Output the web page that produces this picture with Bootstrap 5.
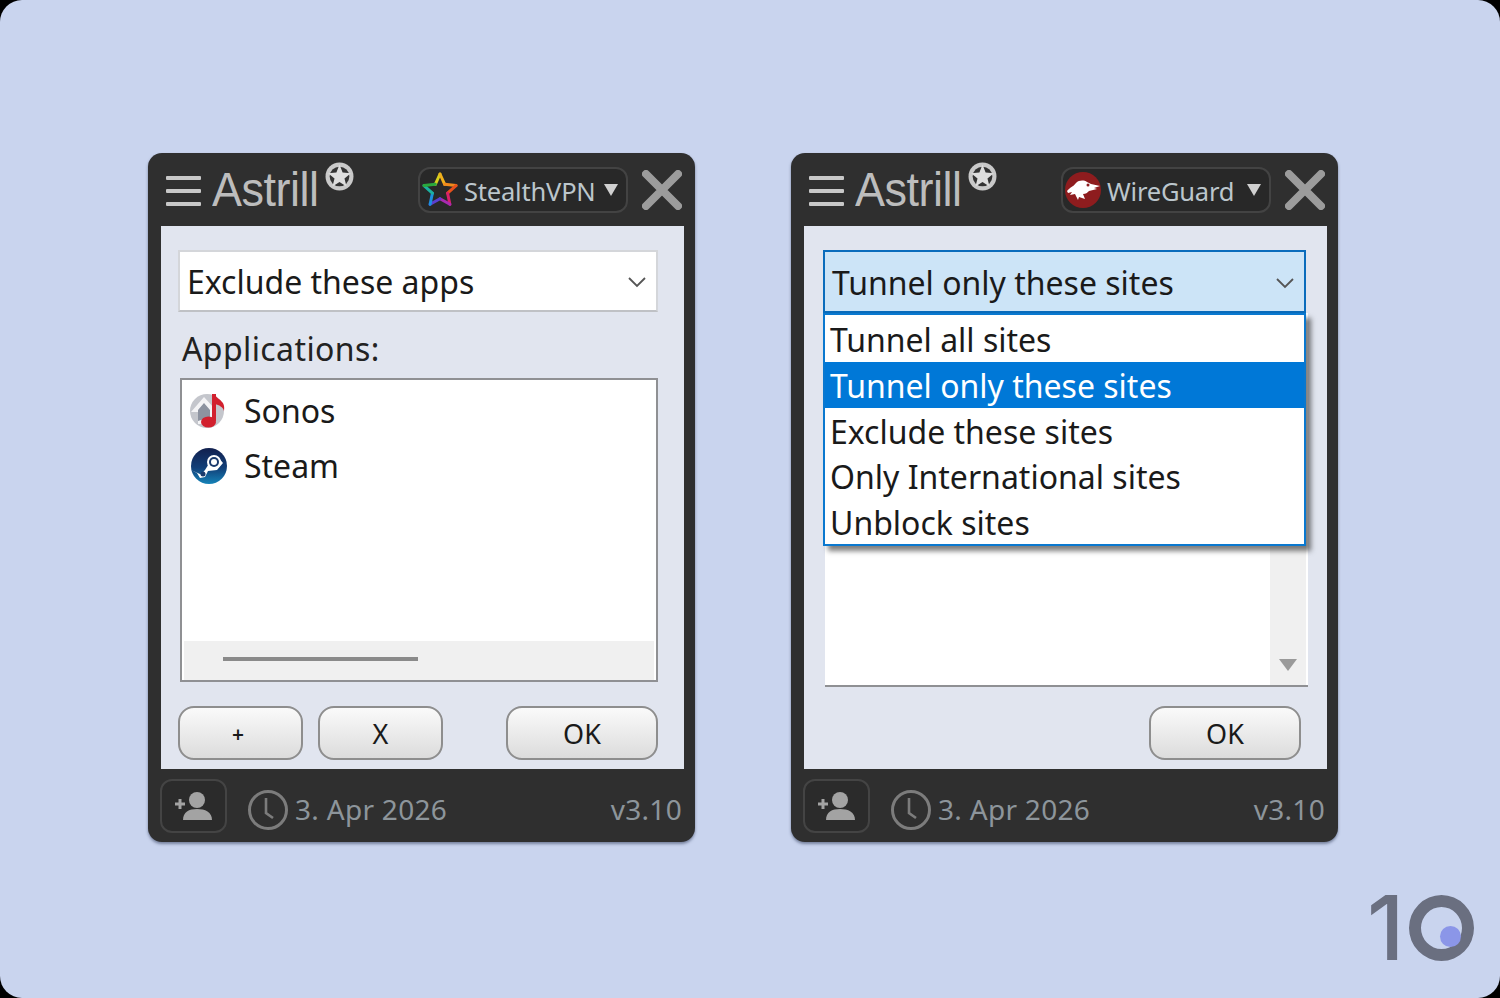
<!DOCTYPE html>
<html lang="en">
<head>
    <meta charset="UTF-8">
    <meta name="viewport" content="width=device-width, initial-scale=1.0">
    <title>Astrill split tunneling</title>
    <link rel="stylesheet" href="https://cdn.jsdelivr.net/npm/bootstrap@5.3.0/dist/css/bootstrap.min.css">
    <style>
        html, body { height: 100%; }
        body { background: #000; font-family: "Noto Sans", "Open Sans", sans-serif; color: #1a1a1a; }
        .stage {
            position: relative;
            width: 1500px;
            height: 998px;
            padding: 153px 0 0 148px;
            gap: 96px;
            background: #c9d4ee;
            border-radius: 22px;
            overflow: hidden;
        }
        .app-win {
            width: 547px;
            height: 689px;
            background: #2f2f2f;
            border-radius: 14px;
            box-shadow: 0 2px 3px rgba(50, 60, 90, .55);
        }
        .win-head { height: 73px; padding: 0 13px 0 18px; }
        .burger { width: 35px; height: 30px; margin-top: 2px; }
        .burger i { display: block; height: 4px; margin-bottom: 9px; background: #c8c8c8; border-radius: 1px; }
        .brand {
            margin-left: 11px;
            font: 400 45px/1 "Liberation Sans", sans-serif;
            letter-spacing: -.5px;
            color: #bdbdbd;
            transform: scaleY(1.08);
        }
        .globe { width: 29px; height: 29px; margin: -26px 0 0 6px; }
        .proto {
            width: 210px;
            height: 46px;
            margin: 0 14px 0 auto;
            padding: 0 8px 0 1px;
            background: #282828;
            border: 2px solid #434343;
            border-radius: 12px;
            font-size: 25.5px;
            letter-spacing: -.2px;
            color: #bcc6cc;
        }
        .proto svg { flex: none; }
        .proto-name { margin: 3px 0 0 5px; }
        .caret-down { width: 0; height: 0; margin-left: auto; border: 7px solid transparent; border-top: 12px solid #d0d0d0; border-bottom: 0; }
        .close-x { width: 40px; height: 40px; }
        .win-main {
            position: relative;
            height: 543px;
            margin: 0 11px 0 13px;
            padding: 24px 26px 0 17px;
            background: #e1e5ef;
        }
        .win-main.wide { padding: 24px 21px 0 19px; }
        .combo {
            height: 62px;
            padding: 2px 9px 0 7px;
            background: #fff;
            border: 2px solid #d4d6da;
            border-bottom-color: #bfc1c5;
            font-size: 32px;
        }
        .combo.open { height: 63px; background: #cce4f7; border-color: #0a6cbc; }
        .chev { width: 20px; height: 12px; margin-left: auto; }
        .field-label { height: 66px; padding: 19px 0 0 4px; font-size: 32px; line-height: 36px; letter-spacing: .4px; color: #222; }
        .app-list {
            position: relative;
            height: 304px;
            margin-left: 2px;
            padding-top: 3px;
            background: #fff;
            border: 2px solid #8f9093;
        }
        .app-row { height: 55px; padding-left: 8px; font-size: 32px; }
        .app-row svg { margin-right: 16px; }
        .hscroll { position: absolute; left: 2px; right: 2px; bottom: 0; height: 39px; background: #f0f0f0; }
        .hthumb { width: 195px; height: 4px; margin: 16px 0 0 39px; background: #8a8a8a; }
        .site-list {
            position: relative;
            height: 374px;
            margin: 0 -2px 0 2px;
            background: #fff;
            border-bottom: 2px solid #8f9093;
        }
        .vscroll { position: absolute; top: 0; right: 2px; bottom: 0; width: 36px; background: #f0f0f0; }
        .vscroll i { position: absolute; left: 9px; bottom: 14px; border: 9px solid transparent; border-top: 12px solid #9a9a9a; border-bottom: 0; }
        .site-menu {
            position: absolute;
            top: 87px;
            left: 19px;
            right: 21px;
            min-width: 0;
            height: 233px;
            margin: 0;
            padding: 1px 0 0;
            background: #fff;
            border: 2px solid #0a78cf;
            border-radius: 0;
            box-shadow: 5px 5px 5px rgba(40, 40, 40, .6);
        }
        .site-menu .dropdown-item {
            height: 45.8px;
            padding: 1px 5px 0;
            font-size: 32px;
            line-height: 45px;
            color: #1a1a1a;
        }
        .site-menu .dropdown-item.active { background: #0078d7; color: #fff; }
        .btn-row { height: 54px; margin-top: 24px; gap: 15px; }
        .win-main.wide .btn-row { margin-top: 19px; padding-right: 5px; }
        .win-btn {
            width: 125px;
            height: 54px;
            padding: 0;
            background: linear-gradient(#fafafa, #dcdcdc);
            border: 2px solid #8e8e8e;
            border-radius: 16px;
            font-size: 27px;
            line-height: 1;
            color: #1a1a1a;
        }
        .win-btn.plus { padding: 3px 5px 0 0; font-size: 21px; font-weight: 600; }
        .win-btn.ok { width: 152px; margin-left: auto; }
        .win-foot { height: 73px; padding: 6px 13px 0 12px; font-size: 28px; letter-spacing: .3px; color: #8d959b; }
        .user-btn { width: 67px; height: 54px; margin-bottom: 5px; background: #2b2b2b; border: 2px solid #444; border-radius: 12px; }
        .clock { width: 42px; height: 42px; margin: 3px 6px 0 20px; }
        .ver { margin-left: auto; }
        .logo-ten { position: absolute; left: 1367px; top: 876px; width: 110px; height: 90px; }
        .logo-one { position: absolute; left: 0; top: 0; font: 500 90px/104px Inter, sans-serif; color: #6a6f80; }
        .logo-ring { position: absolute; left: 42px; top: 19px; width: 65px; height: 66px; border: 12px solid #6a6f80; border-radius: 50%; }
        .logo-dot { position: absolute; left: 73px; top: 50px; width: 21px; height: 21px; background: #8b96e8; border-radius: 50%; }
    </style>
</head>
<body>
    <div class="stage d-flex align-items-start">

        <div class="app-win d-flex flex-column">
            <div class="win-head d-flex align-items-center">
                <div class="burger"><i></i><i></i><i></i></div>
                <span class="brand">Astrill</span>
                <svg class="globe" viewBox="0 0 28 28"><circle cx="14" cy="14" r="13.500" fill="#c9c9c9"/><circle cx="14" cy="14" r="9.500" fill="#333"/><path d="M14 2.500l3 7.700 8 .6-6.200 5.100 2 7.800L14 19.400l-6.800 4.300 2-7.800L3 10.800l8-.6z" fill="#dedede"/></svg>
                <div class="proto d-flex align-items-center">
                    <svg width="38" height="38" viewBox="0 0 38 38" fill="none" stroke-width="3" stroke-linecap="round" stroke-linejoin="round"><path d="M19 3l-4.700 10.300" stroke="#d6cf1e"/><path d="M19 3l4.700 10.300" stroke="#f0b01c"/><path d="M23.700 13.300L35 14.600" stroke="#f08a1c"/><path d="M35 14.600l-8.400 7.600" stroke="#e8501c"/><path d="M26.600 22.200l2.300 11.100" stroke="#d8206a"/><path d="M28.900 33.300L19 27.700" stroke="#a82ab0"/><path d="M19 27.700L9.100 33.300" stroke="#5a3fd0"/><path d="M9.100 33.300l2.300-11.100" stroke="#1c8fe0"/><path d="M11.400 22.200L3 14.600" stroke="#1cb0a0"/><path d="M3 14.600l11.300-1.300" stroke="#2aa83c"/></svg>
                    <span class="proto-name">StealthVPN</span>
                    <span class="caret-down"></span>
                </div>
                <svg class="close-x" viewBox="0 0 40 40"><path d="M4 4l32 32M36 4L4 36" stroke="#9c9c9c" stroke-width="8" stroke-linecap="round"/></svg>
            </div>
            <div class="win-main">
                <div class="combo d-flex align-items-center">
                    <span>Exclude these apps</span>
                    <svg class="chev" viewBox="0 0 20 12"><path d="M2 2l8 8 8-8" fill="none" stroke="#555" stroke-width="1.800"/></svg>
                </div>
                <div class="field-label">Applications:</div>
                <div class="app-list">
                    <div class="app-row d-flex align-items-center">
                        <svg width="38" height="38" viewBox="0 0 38 38"><circle cx="17" cy="19" r="17" fill="#c4c6cc"/><path d="M1 20L14 5l10 11v16H8V20z" fill="#f4f4f6"/><path d="M8 18l6-7 6 7v12l-6-3-6 2z" fill="#8d93a0"/><path d="M24 2v27" stroke="#d2202e" stroke-width="4"/><ellipse cx="18.500" cy="30" rx="7.500" ry="5.500" fill="#d2202e"/><path d="M25 3c3 5 11 6 9 16-1-4-5-6-9-7z" fill="#d2202e"/></svg>
                        <span>Sonos</span>
                    </div>
                    <div class="app-row d-flex align-items-center">
                        <svg width="38" height="38" viewBox="0 0 38 38"><defs><linearGradient id="st" x1="0" y1="0" x2="0" y2="1"><stop offset="0" stop-color="#12204e"/><stop offset=".55" stop-color="#123f78"/><stop offset="1" stop-color="#1583b8"/></linearGradient></defs><circle cx="19" cy="19" r="18" fill="url(#st)"/><path d="M1 23l10 4.500 4-4.500L20 15l8-5 5 6-6 7-9 1-3 6-5 1-3-5z" fill="#fff"/><circle cx="24" cy="15" r="7" fill="#fff"/><circle cx="24" cy="15" r="5" fill="#1a3a6c"/><circle cx="24" cy="15" r="3" fill="#fff"/><circle cx="13" cy="27" r="2.500" fill="#1a3a6c"/></svg>
                        <span>Steam</span>
                    </div>
                    <div class="hscroll"><div class="hthumb"></div></div>
                </div>
                <div class="btn-row d-flex">
                    <button type="button" class="btn win-btn plus">+</button>
                    <button type="button" class="btn win-btn">X</button>
                    <button type="button" class="btn win-btn ok">OK</button>
                </div>
            </div>
            <div class="win-foot d-flex align-items-center">
                <div class="user-btn d-flex align-items-center justify-content-center">
                    <svg width="38" height="30" viewBox="0 0 38 30"><circle cx="22" cy="9" r="8" fill="#a3a3a3"/><path d="M8 29c0-8 6-11 14-11s15 3 15 11z" fill="#a3a3a3"/><path d="M0 13h10M5 8v10" stroke="#a3a3a3" stroke-width="3"/></svg>
                </div>
                <svg class="clock" viewBox="0 0 42 42"><circle cx="21" cy="21" r="18.500" fill="none" stroke="#7c7c7c" stroke-width="3"/><path d="M19 9v15l7 5" fill="none" stroke="#7c7c7c" stroke-width="2.600"/></svg>
                <span>3. Apr 2026</span>
                <span class="ver">v3.10</span>
            </div>
        </div>

        <div class="app-win d-flex flex-column">
            <div class="win-head d-flex align-items-center">
                <div class="burger"><i></i><i></i><i></i></div>
                <span class="brand">Astrill</span>
                <svg class="globe" viewBox="0 0 28 28"><circle cx="14" cy="14" r="13.500" fill="#c9c9c9"/><circle cx="14" cy="14" r="9.500" fill="#333"/><path d="M14 2.500l3 7.700 8 .6-6.200 5.100 2 7.800L14 19.400l-6.800 4.300 2-7.800L3 10.800l8-.6z" fill="#dedede"/></svg>
                <div class="proto d-flex align-items-center">
                    <svg width="38" height="38" viewBox="0 0 38 38"><circle cx="19" cy="19" r="18" fill="#8e1c1e"/><path d="M3 20c3-4 6-4 9-8 3-3 8-3 11-1l4 2 9 2-6 2 3 1-8 2c-2 2-3 3-6 3l2 5-6-2-1 3-3-6-5 1 2-3-4 1z" fill="#fff"/><circle cx="24" cy="14" r="1.500" fill="#8e1c1e"/></svg>
                    <span class="proto-name">WireGuard</span>
                    <span class="caret-down"></span>
                </div>
                <svg class="close-x" viewBox="0 0 40 40"><path d="M4 4l32 32M36 4L4 36" stroke="#9c9c9c" stroke-width="8" stroke-linecap="round"/></svg>
            </div>
            <div class="win-main wide">
                <div class="combo open d-flex align-items-center">
                    <span>Tunnel only these sites</span>
                    <svg class="chev" viewBox="0 0 20 12"><path d="M2 2l8 8 8-8" fill="none" stroke="#555" stroke-width="1.800"/></svg>
                </div>
                <div class="site-list">
                    <div class="vscroll"><i></i></div>
                </div>
                <ul class="dropdown-menu show site-menu list-unstyled">
                    <li><a class="dropdown-item" href="#">Tunnel all sites</a></li>
                    <li><a class="dropdown-item active" href="#">Tunnel only these sites</a></li>
                    <li><a class="dropdown-item" href="#">Exclude these sites</a></li>
                    <li><a class="dropdown-item" href="#">Only International sites</a></li>
                    <li><a class="dropdown-item" href="#">Unblock sites</a></li>
                </ul>
                <div class="btn-row d-flex">
                    <button type="button" class="btn win-btn ok">OK</button>
                </div>
            </div>
            <div class="win-foot d-flex align-items-center">
                <div class="user-btn d-flex align-items-center justify-content-center">
                    <svg width="38" height="30" viewBox="0 0 38 30"><circle cx="22" cy="9" r="8" fill="#a3a3a3"/><path d="M8 29c0-8 6-11 14-11s15 3 15 11z" fill="#a3a3a3"/><path d="M0 13h10M5 8v10" stroke="#a3a3a3" stroke-width="3"/></svg>
                </div>
                <svg class="clock" viewBox="0 0 42 42"><circle cx="21" cy="21" r="18.500" fill="none" stroke="#7c7c7c" stroke-width="3"/><path d="M19 9v15l7 5" fill="none" stroke="#7c7c7c" stroke-width="2.600"/></svg>
                <span>3. Apr 2026</span>
                <span class="ver">v3.10</span>
            </div>
        </div>

        <div class="logo-ten">
            <span class="logo-one">1</span>
            <div class="logo-ring"></div>
            <div class="logo-dot"></div>
        </div>
    </div>
    <script src="https://cdn.jsdelivr.net/npm/bootstrap@5.3.0/dist/js/bootstrap.bundle.min.js"></script>
</body>
</html>
